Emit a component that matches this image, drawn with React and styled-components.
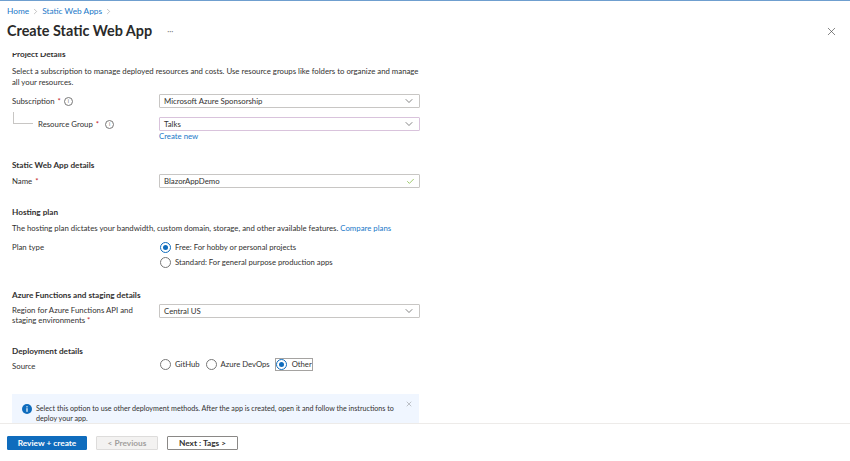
import React from 'react'
import styled, { createGlobalStyle } from 'styled-components'
import { ChevronDown, ChevronRight, Check, X } from 'lucide-react'

const Global = createGlobalStyle`
  html, body { margin: 0; padding: 0; background: #fff; }
  body { font-family: Lato, "Noto Sans", sans-serif; color: #323130; }
`

const Page = styled.div`
  width: 850px;
  height: 461px;
  display: flex;
  flex-direction: column;
  overflow: hidden;
  border-top: 1px solid #6f9fcf;
  box-sizing: border-box;
`
const Crumbs = styled.nav`
  height: 20px;
  padding-left: 7px;
  display: flex;
  align-items: center;
  gap: 2px;
  font-size: 8.3px;
  color: #666;
`
const Link = styled.a`
  color: #1a78c8;
`
const TitleBar = styled.header`
  height: 20px;
  padding: 0 12px 0 7px;
  display: flex;
  align-items: center;
  color: #2a2a2a;
`
const Title = styled.h1`
  margin: 0;
  font-size: 14.4px;
  font-weight: 700;
  line-height: 20px;
`
const Dots = styled.span`
  margin-left: 15px;
  font-size: 8px;
  color: #777;
`
const Close = styled.span`
  margin-left: auto;
  display: flex;
  color: #444;
`
const Scroll = styled.main`
  flex: 1;
  min-height: 0;
  overflow: hidden;
  padding: 0 431px 0 12px;
  margin-top: 12px;
`
const Clipped = styled.h2`
  margin: -5px 0 0;
  height: 12px;
  line-height: 12px;
  font-size: 8.2px;
  font-weight: 700;
`
const Heading = styled.h2`
  margin: ${p => p.$top}px 0 0;
  height: 12px;
  line-height: 12px;
  font-size: 8.2px;
  font-weight: 700;
`
const Text = styled.p`
  margin: ${p => p.$top}px 0 0;
  font-size: 7.8px;
  line-height: 10.5px;
  white-space: nowrap;
`
const Row = styled.div`
  display: grid;
  grid-template-columns: 147px 261px;
  align-items: ${p => p.$align || 'center'};
  margin-top: ${p => p.$top}px;
  min-height: 14px;
`
const Label = styled.label`
  font-size: 7.8px;
  line-height: 10.5px;
  display: ${p => p.$block ? 'block' : 'flex'};
  align-items: center;
  gap: 3px;
  padding-left: ${p => p.$indent || 0}px;
  padding-top: ${p => p.$pad || 0}px;
  position: relative;
`
const Tree = styled.span`
  position: absolute;
  left: 1px;
  top: -7px;
  width: 19px;
  height: 11px;
  border-left: 1px solid #c8c6c4;
  border-bottom: 1px solid #c8c6c4;
`
const Star = styled.span`
  color: #c4262e;
`
const Info = styled.span`
  width: 7px;
  height: 7px;
  margin-left: ${p => p.$left || 0}px;
  border: 0.7px solid #777;
  border-radius: 50%;
  font-size: 5px;
  line-height: 7px;
  text-align: center;
  color: #666;
`
const Field = styled.div`
  height: 14px;
  box-sizing: border-box;
  border: 1px solid ${p => p.$focus ? '#d9c3dc' : '#c8c6c4'};
  border-radius: 1px;
  padding: 0 4px;
  display: flex;
  align-items: center;
  justify-content: space-between;
  font-size: 7.8px;
  color: #323130;
`
const Small = styled.div`
  font-size: 7.8px;
  line-height: 10.5px;
`
const Radios = styled.div`
  display: flex;
  flex-direction: ${p => p.$column ? 'column' : 'row'};
  gap: ${p => p.$column ? '4px' : '6px'};
  padding-left: 1px;
`
const RadioItem = styled.span`
  display: flex;
  align-items: center;
  gap: ${p => p.$outlined ? 5 : 4}px;
  height: 11px;
  font-size: 7.7px;
  ${p => p.$outlined && 'outline: 1px solid #a5a3a1;'}
`
const Dot = styled.span`
  width: 11px;
  height: 11px;
  box-sizing: border-box;
  border-radius: 50%;
  border: 1px solid ${p => p.$on ? '#0f6cbd' : '#777'};
  display: flex;
  align-items: center;
  justify-content: center;
  &::after {
    content: '';
    width: 5px;
    height: 5px;
    border-radius: 50%;
    background: ${p => p.$on ? '#0f6cbd' : 'transparent'};
  }
`
const Banner = styled.div`
  margin-top: 21px;
  width: 407px;
  height: 36px;
  box-sizing: border-box;
  background: #f0f6ff;
  padding: 10px 6px 0 10px;
  display: flex;
  gap: 4px;
  font-size: 7.15px;
  line-height: 10px;
`
const BannerIcon = styled.svg`
  flex: none;
  width: 10px;
  height: 10px;
`
const BannerText = styled.span`
  flex: 1;
  white-space: nowrap;
`
const BannerClose = styled.span`
  flex: none;
  display: flex;
  margin: -4px 0 0 0;
  color: #555;
`
const Footer = styled.footer`
  height: 38px;
  flex: none;
  border-top: 1px solid #edebe9;
  padding: 12px 0 0 7px;
  box-sizing: border-box;
  display: flex;
  align-items: flex-start;
  background: #fff;
`
const Button = styled.button`
  height: 14px;
  width: ${p => p.$w}px;
  margin-right: ${p => p.$gap}px;
  padding: 0;
  box-sizing: border-box;
  font: 700 8.3px Lato, sans-serif;
  border-radius: 1px;
  border: 1px solid ${p => p.$primary ? '#0f6cbd' : p.disabled ? '#dddcdb' : '#8a8886'};
  background: ${p => p.$primary ? '#0f6cbd' : p.disabled ? '#f3f2f1' : '#fff'};
  color: ${p => p.$primary ? '#fff' : p.disabled ? '#a19f9d' : '#323130'};
`

const Radio = ({ on, outlined, children }) => (
  <RadioItem $outlined={outlined}><Dot $on={on} />{children}</RadioItem>
)

const Select = ({ focus, children }) => (
  <Field $focus={focus}>{children}<ChevronDown size={12} strokeWidth={1.2} color="#333" /></Field>
)

export default function App() {
  return (
    <Page>
      <Global />
      <Crumbs>
        <Link>Home</Link>
        <ChevronRight size={9} strokeWidth={1} />
        <Link>Static Web Apps</Link>
        <ChevronRight size={9} strokeWidth={1} />
      </Crumbs>
      <TitleBar>
        <Title>Create Static Web App</Title>
        <Dots>···</Dots>
        <Close><X size={13} strokeWidth={1.2} /></Close>
      </TitleBar>
      <Scroll>
        <Clipped>Project Details</Clipped>
        <Text $top={6}>
          Select a subscription to manage deployed resources and costs. Use resource groups like folders to organize and manage<br />
          all your resources.
        </Text>
        <Row $top={7}>
          <Label>Subscription <Star>*</Star><Info>i</Info></Label>
          <Select>Microsoft Azure Sponsorship</Select>
        </Row>
        <Row $top={9}>
          <Label $indent={26}><Tree />Resource Group <Star>*</Star><Info $left={3}>i</Info></Label>
          <Select focus>Talks</Select>
        </Row>
        <Row $top={0} $align="start">
          <span />
          <Small><Link>Create new</Link></Small>
        </Row>
        <Heading $top={14}>Static Web App details</Heading>
        <Row $top={3}>
          <Label>Name <Star>*</Star></Label>
          <Field>BlazorAppDemo<Check size={9} strokeWidth={1.5} color="#57a300" /></Field>
        </Row>
        <Heading $top={18}>Hosting plan</Heading>
        <Text $top={5}>
          The hosting plan dictates your bandwidth, custom domain, storage, and other available features. <Link>Compare plans</Link>
        </Text>
        <Row $top={8} $align="start">
          <Label>Plan type</Label>
          <Radios $column>
            <Radio on>Free: For hobby or personal projects</Radio>
            <Radio>Standard: For general purpose production apps</Radio>
          </Radios>
        </Row>
        <Heading $top={21}>Azure Functions and staging details</Heading>
        <Row $top={3} $align="start">
          <Label $block $pad={1}>Region for Azure Functions API and<br />staging environments <Star>*</Star></Label>
          <Select>Central US</Select>
        </Row>
        <Heading $top={19}>Deployment details</Heading>
        <Row $top={2} $align="start">
          <Label $pad={2}>Source</Label>
          <Radios>
            <Radio>GitHub</Radio>
            <Radio>Azure DevOps</Radio>
            <Radio on outlined>Other</Radio>
          </Radios>
        </Row>
        <Banner>
          <BannerIcon viewBox="0 0 10 10">
            <circle cx="5" cy="5" r="5" fill="#0f6cbd" />
            <rect x="4.4" y="4.2" width="1.2" height="3.6" fill="#fff" />
            <rect x="4.4" y="2.2" width="1.2" height="1.2" fill="#fff" />
          </BannerIcon>
          <BannerText>
            Select this option to use other deployment methods. After the app is created, open it and follow the instructions to<br />
            deploy your app.
          </BannerText>
          <BannerClose><X size={8} strokeWidth={1} /></BannerClose>
        </Banner>
      </Scroll>
      <Footer>
        <Button $primary $w={80} $gap={9}>Review + create</Button>
        <Button disabled $w={62} $gap={9}>&lt; Previous</Button>
        <Button $w={71} $gap={0}>Next : Tags &gt;</Button>
      </Footer>
    </Page>
  )
}
